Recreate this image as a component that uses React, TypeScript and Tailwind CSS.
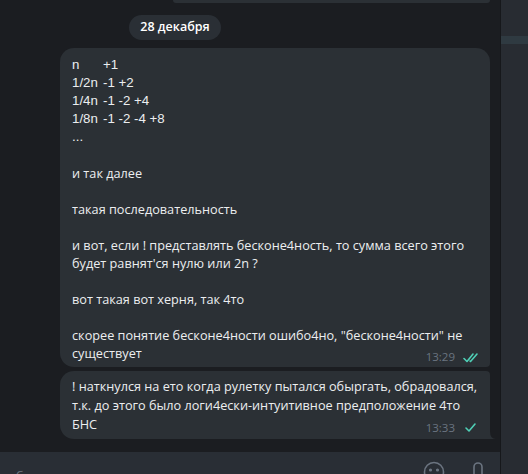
import React from "react";

const Check = ({ double }: { double?: boolean }) => (
  <svg width="17" height="11" viewBox="0 0 17 11" fill="none" stroke="#4fcfb6" strokeWidth="1.6" strokeLinecap="round" strokeLinejoin="round">
    {double ? (
      <>
        <path d="M1 6.5 L4 9.5 L10 2" />
        <path d="M7 9 L7.5 9.5 L14 2" />
      </>
    ) : (
      <path d="M3 6 L6 9 L12 2" />
    )}
  </svg>
);

export default function App() {
  const sans = { fontFamily: '"Open Sans", "Noto Sans", sans-serif' } as React.CSSProperties;
  return (
    <div className="w-[528px] h-[474px] overflow-hidden flex bg-[#1b1d21] text-[#eceef0]" style={sans}>
      <div className="w-[500px] h-full flex flex-col">
        <div className="flex-1 flex flex-col">
          {/* previous bubble bottom */}
          <div className="ml-[173px] w-[317px] h-[3px] bg-[#2b3035] rounded-b-[10px]" />
          <div className="mt-[12px] ml-[129px] w-[92px] h-[25px] rounded-full bg-[#2a2f35] flex items-center justify-center text-[12.5px] font-semibold text-white">
            28 декабря
          </div>
          {/* bubble 1 */}
          <div className="mt-[8px] ml-[60px] w-[430px] bg-[#2b3035] rounded-tl-[14px] rounded-tr-[14px] rounded-bl-[14px] rounded-br-[4px] pl-[12px] pr-[10px] pt-[8px] pb-[5px] text-[12.7px] leading-[18px] whitespace-nowrap">
            <div style={{ fontFamily: '"Liberation Sans", Arial, sans-serif', fontSize: "13.3px" }}>
              <div className="flex"><span className="w-[31px] shrink-0">n</span><span>+1</span></div>
              <div className="flex"><span className="w-[31px] shrink-0">1/2n</span><span>-1 +2</span></div>
              <div className="flex"><span className="w-[31px] shrink-0">1/4n</span><span>-1 -2 +4</span></div>
              <div className="flex"><span className="w-[31px] shrink-0">1/8n</span><span>-1 -2 -4 +8</span></div>
              <div>...</div>
            </div>
            <div className="h-[18px]" />
            <div>и так далее</div>
            <div className="h-[18px]" />
            <div>такая последовательность</div>
            <div className="h-[18px]" />
            <div>и вот, если ! представлять бесконе4ность, то сумма всего этого</div>
            <div>будет равнят'ся нулю или 2n ?</div>
            <div className="h-[18px]" />
            <div>вот такая вот херня, так 4то</div>
            <div className="h-[18px]" />
            <div>скорее понятие бесконе4ности ошибо4но, "бесконе4ности" не</div>
            <div className="flex items-end justify-between">
              <span>существует</span>
              <span className="flex items-center gap-[8px] text-[11.5px] text-[#6a7480] translate-y-[4px]">
                13:29 <Check double />
              </span>
            </div>
          </div>
          {/* bubble 2 */}
          <div className="relative mt-[4px] ml-[60px] w-[430px] bg-[#2b3035] rounded-tl-[14px] rounded-tr-[4px] rounded-bl-[14px] rounded-br-none pl-[12px] pr-[10px] pt-[6px] pb-[5px] text-[12.7px] leading-[19px] whitespace-nowrap">
            <div>! наткнулся на ето когда рулетку пытался обыргать, обрадовался,</div>
            <div>т.к. до этого было логи4ески-интуитивное предположение 4то</div>
            <div className="flex items-end justify-between">
              <span>БНС</span>
              <span className="flex items-center gap-[8px] text-[11.5px] text-[#6a7480] translate-y-[3px]">
                13:33 <Check />
              </span>
            </div>
            <svg className="absolute right-[-6px] bottom-0" width="6" height="8" viewBox="0 0 6 8">
              <path d="M0 0 Q0 8 6 8 L0 8 Z" fill="#2b3035" />
            </svg>
          </div>
        </div>
        {/* composer */}
        <div className="h-[22px] bg-[#292e35] relative overflow-hidden">
          <span className="absolute left-[0px] top-[15px] text-[13px] text-[#6d7680]">ообщение</span>
          <svg className="absolute left-[423px] top-[9px]" width="22" height="22" viewBox="0 0 22 22" fill="none" stroke="#6b7480" strokeWidth="1.6">
            <circle cx="11" cy="11" r="9.5" />
            <circle cx="7.5" cy="9" r="0.8" fill="#6b7480" />
            <circle cx="14.5" cy="9" r="0.8" fill="#6b7480" />
          </svg>
          <svg className="absolute left-[472px] top-[10px]" width="12" height="22" viewBox="0 0 12 22" fill="none" stroke="#6b7480" strokeWidth="1.6">
            <path d="M2 20 V5 a4 4 0 0 1 8 0 V16" />
          </svg>
        </div>
      </div>
      <div className="w-[28px] h-full bg-[#282c32] border-l border-[#16181b] flex flex-col">
        <div className="h-[36px]" />
        <div className="h-[8px] bg-[#2f3a41]" />
      </div>
    </div>
  );
}
